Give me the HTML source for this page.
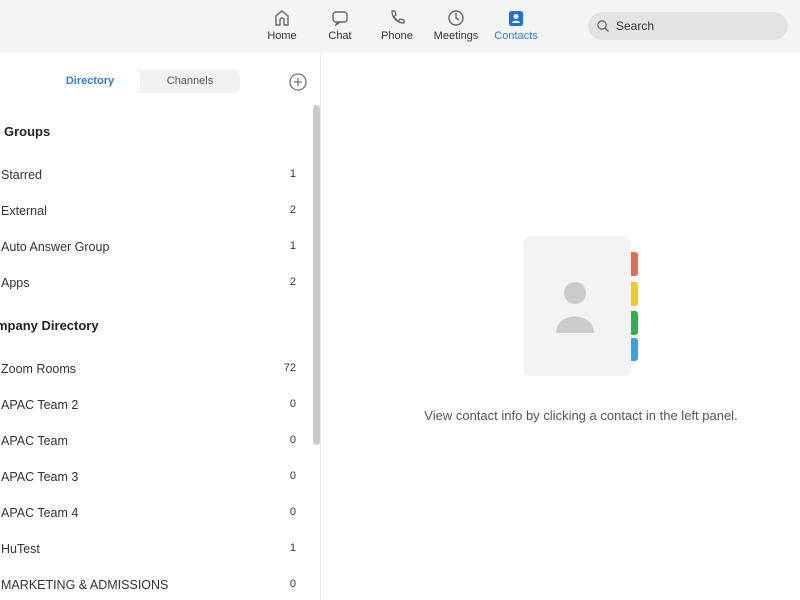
<!DOCTYPE html>
<html><head><style>
body{margin:0;width:800px;height:600px;overflow:hidden;background:#fff;font-family:"Liberation Sans",sans-serif;position:relative}
.top{position:absolute;left:0;top:0;width:800px;height:53px;background:#f4f4f5}
.nav{position:absolute;top:8px;text-align:center;font-size:11px;color:#333;width:60px}
.nav svg{display:block;margin:0 auto 2px}
.search{position:absolute;left:588px;top:12px;width:200px;height:28px;border-radius:14px;background:#e3e3e5;font-size:12px;color:#333}
.left{position:absolute;left:0;top:53px;width:320px;height:547px;border-right:1px solid #eee}
.tabs{position:absolute;left:40px;top:16px;width:200px;height:24px;background:#f2f2f4;border-radius:7px}
.tab{position:absolute;top:0;height:24px;line-height:24px;font-size:11px;text-align:center}
.row{position:absolute;left:1px;width:299px;font-size:12.5px;color:#333}
.row span{position:absolute;right:4px;font-size:11px}
.h{font-weight:bold;font-size:13px;color:#222}
.sb{position:absolute;left:313px;top:105px;width:7px;height:340px;background:#c9c9c9;border-radius:4px}
</style></head><body>
<div class="top">
<div class="nav" style="left:252px"><svg width="18" height="20" viewBox="0 0 18 20"><path d="M3 17V8l6-5 6 5v9h-4v-5a2 2 0 0 0-4 0v5z" fill="none" stroke="#666" stroke-width="1.4"/></svg>Home</div>
<div class="nav" style="left:310px"><svg width="18" height="20" viewBox="0 0 18 20"><rect x="2" y="4" width="14" height="10" rx="3" fill="none" stroke="#666" stroke-width="1.4"/><path d="M6 14l-1 3 4-3" fill="none" stroke="#666" stroke-width="1.3"/></svg>Chat</div>
<div class="nav" style="left:367px"><svg width="18" height="20" viewBox="0 0 18 20"><path d="M4 3l3 0 1 4-2 1.5c1 2 2.5 3.5 4.5 4.5L12 11l4 1v3c-7 0-12-5-12-12z" fill="none" stroke="#666" stroke-width="1.3"/></svg>Phone</div>
<div class="nav" style="left:426px"><svg width="18" height="20" viewBox="0 0 18 20"><circle cx="9" cy="10" r="7" fill="none" stroke="#666" stroke-width="1.4"/><path d="M9 5v5l3 2" fill="none" stroke="#666" stroke-width="1.4"/></svg>Meetings</div>
<div class="nav" style="left:486px;color:#2b7de9"><svg width="18" height="20" viewBox="0 0 18 20"><rect x="2" y="3" width="14" height="15" rx="2.5" fill="#1b6fe6"/><circle cx="9" cy="8.5" r="2.5" fill="#fff"/><path d="M5 15c0-3 8-3 8 0z" fill="#fff"/></svg>Contacts</div>
<div class="search"><svg width="14" height="14" style="position:absolute;left:8px;top:7px" viewBox="0 0 14 14"><circle cx="6" cy="6" r="4.2" fill="none" stroke="#666" stroke-width="1.3"/><path d="M9 9l3.5 3.5" stroke="#666" stroke-width="1.3"/></svg><span style="position:absolute;left:28px;top:7px">Search</span></div>
</div>
<div class="left">
<div class="tabs"><div class="tab" style="left:0;width:100px;background:#fff;border-radius:7px;color:#2b7de9;font-weight:bold">Directory</div><div class="tab" style="left:100px;width:100px;color:#555">Channels</div></div>
<svg width="18" height="18" style="position:absolute;left:289px;top:20px" viewBox="0 0 18 18"><rect x="1" y="1" width="16" height="16" rx="8" fill="none" stroke="#777" stroke-width="1.3"/><path d="M9 5v8M5 9h8" stroke="#777" stroke-width="1.3"/></svg>
</div>
<div class="sb"></div>
<div class="row h" style="top:124px;left:4px">Groups</div>
<div class="row" style="top:168px">Starred<span>1</span></div>
<div class="row" style="top:204px">External<span>2</span></div>
<div class="row" style="top:240px">Auto Answer Group<span>1</span></div>
<div class="row" style="top:276px">Apps<span>2</span></div>
<div class="row h" style="top:318px;left:-4px">mpany Directory</div>
<div class="row" style="top:362px">Zoom Rooms<span>72</span></div>
<div class="row" style="top:398px">APAC Team 2<span>0</span></div>
<div class="row" style="top:434px">APAC Team<span>0</span></div>
<div class="row" style="top:470px">APAC Team 3<span>0</span></div>
<div class="row" style="top:506px">APAC Team 4<span>0</span></div>
<div class="row" style="top:542px">HuTest<span>1</span></div>
<div class="row" style="top:578px">MARKETING &amp; ADMISSIONS<span>0</span></div>
<svg width="130" height="150" style="position:absolute;left:520px;top:233px" viewBox="0 0 130 150">
<rect x="108" y="19" width="10" height="24" rx="3" fill="#ec6a4c"/>
<rect x="108" y="49" width="10" height="24" rx="3" fill="#f3cb1c"/>
<rect x="108" y="78" width="10" height="24" rx="3" fill="#2bb34a"/>
<rect x="108" y="105" width="10" height="23" rx="3" fill="#36a2e8"/>
<rect x="3" y="3" width="108" height="140" rx="8" fill="#f3f3f4"/>
<circle cx="55" cy="60" r="11" fill="#cbcbcb"/>
<path d="M36 100c0-22 38-22 38 0z" fill="#cbcbcb"/>
</svg>
<div style="position:absolute;left:422px;width:318px;top:408px;text-align:center;font-size:13px;color:#555;white-space:nowrap">View contact info by clicking a contact in the left panel.</div>
</body></html>
